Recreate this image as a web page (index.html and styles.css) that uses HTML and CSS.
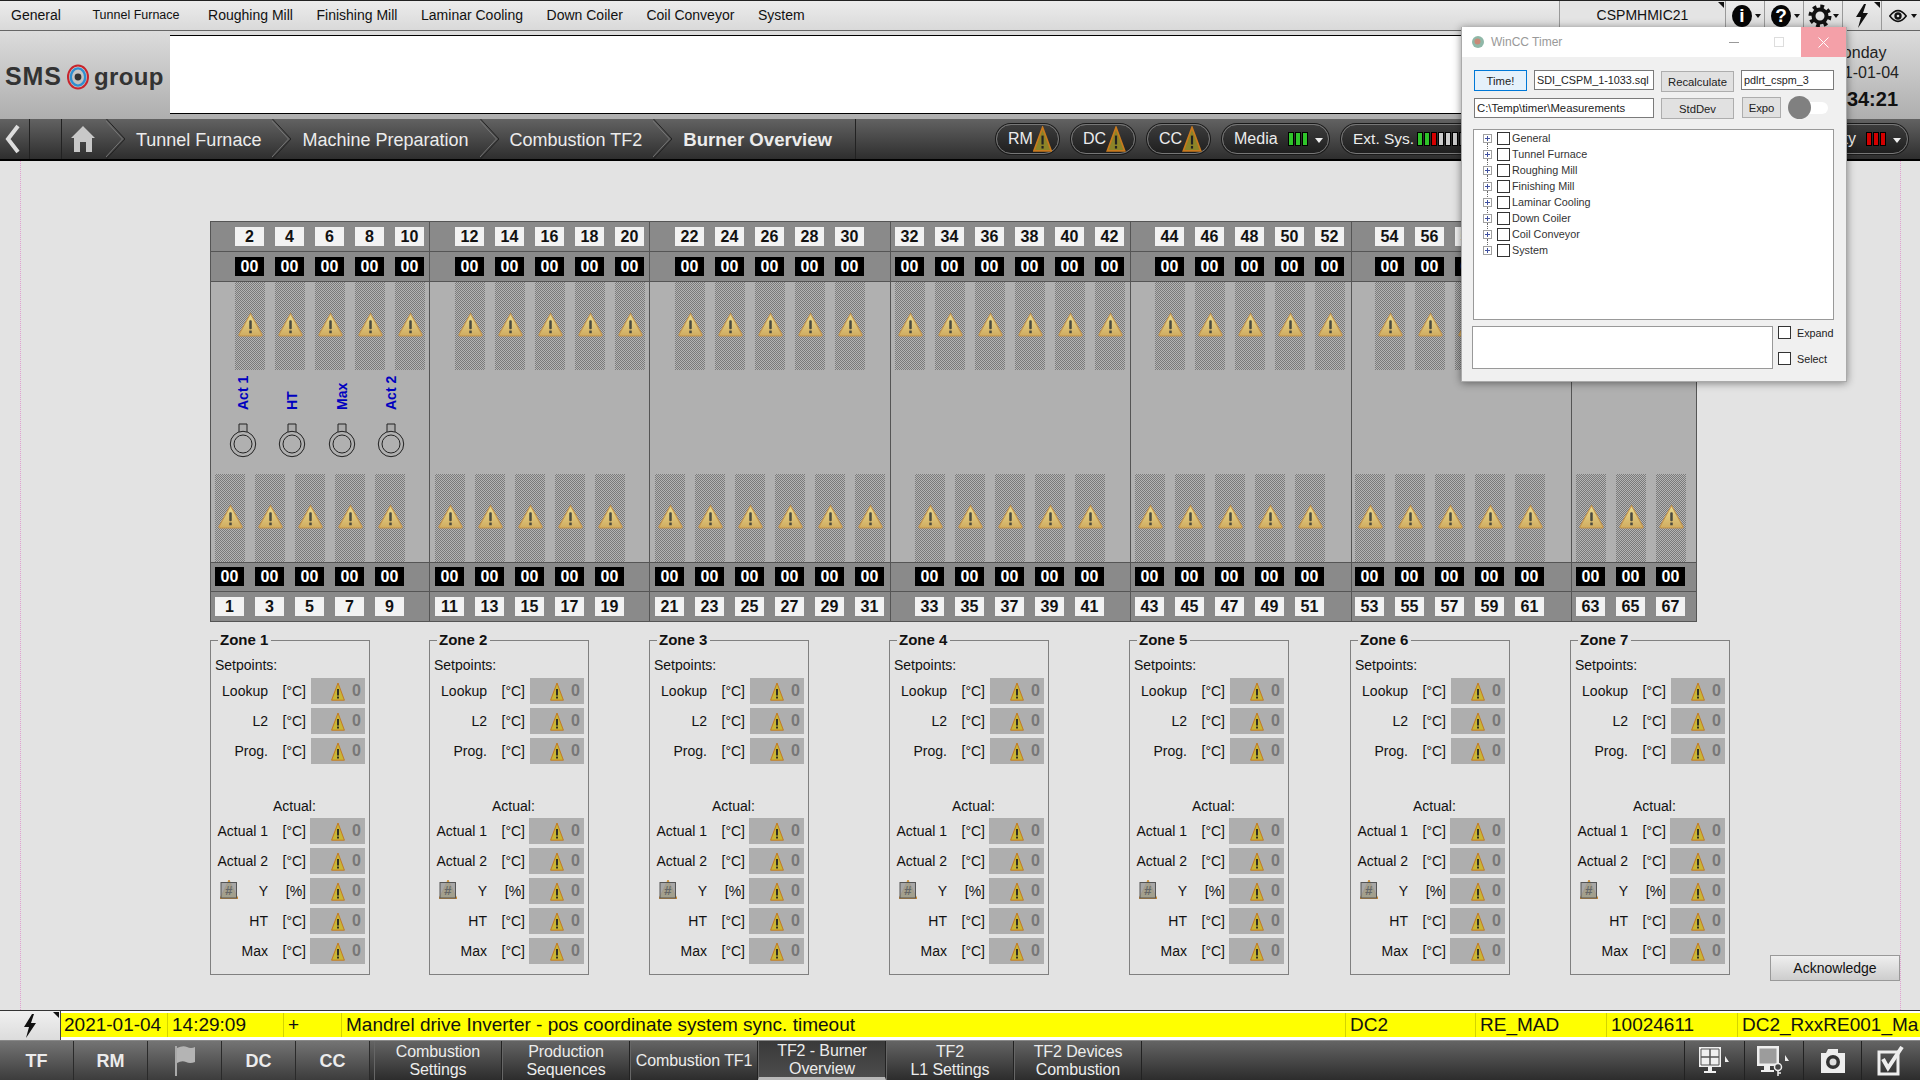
FILE: index.html
```html
<!doctype html>
<html>
<head>
<meta charset="utf-8">
<title>Burner Overview</title>
<link rel="stylesheet" href="styles.css">
</head>
<body>
<svg class="defs" width="0" height="0">
	<defs>
		<linearGradient id="tanktri" x1="0" y1="0" x2="0" y2="1">
			<stop offset="0" stop-color="#ecdc90"/>
			<stop offset="1" stop-color="#d0ac60"/>
		</linearGradient>
	</defs>
	<symbol id="warn" viewBox="0 0 24 24">
		<path d="M12 1.5 L23 21.5 Q23.5 23 22 23 H2 Q.5 23 1 21.5 Z" fill="url(#tanktri)" stroke="#c2924a" stroke-width="1"/>
		<rect x="10.8" y="8" width="2.4" height="8.5" rx="1" fill="#4a4a40"/>
		<rect x="10.8" y="17.8" width="2.4" height="2.6" fill="#4a4a40"/>
	</symbol>
	<symbol id="warnflat" viewBox="0 0 14 19">
		<path d="M7 1 L13.4 18.2 H.6 Z" fill="#c8b636" stroke="#c47a22" stroke-width="1"/>
		<rect x="6.1" y="7" width="1.8" height="6.5" fill="#222"/>
		<rect x="6.1" y="14.6" width="1.8" height="1.9" fill="#222"/>
	</symbol>
	<symbol id="pillwarn" viewBox="0 0 14 19">
		<path d="M7 1 L13.4 18.2 H.6 Z" fill="#8c8428" stroke="#c87a1e" stroke-width="1.2"/>
		<rect x="6.2" y="7" width="1.6" height="6.5" fill="#222"/>
		<rect x="6.2" y="14.6" width="1.6" height="1.9" fill="#222"/>
	</symbol>
	<symbol id="yflag" viewBox="0 0 18 19">
		<path d="M9 0 L18 18.5 H0 Z" fill="#c8b636" stroke="#c47a22" stroke-width=".8"/>
		<rect x="1" y="2.5" width="15.5" height="15.5" fill="#9c9c9c" fill-opacity=".85" stroke="#555"/>
		<text x="8.7" y="15" font-size="13" font-weight="bold" font-style="italic" text-anchor="middle" fill="#666" font-family="Liberation Sans">#</text>
	</symbol>
	<symbol id="chev" viewBox="0 0 19 40">
		<path d="M.5 0 L19 20 L.5 40" fill="none" stroke="#222" stroke-width="1"/>
		<path d="M0 1 L17.5 20 L0 39" fill="none" stroke="#777" stroke-width="1" transform="translate(-1 0)"/>
	</symbol>
</svg>

<header class="menubar">
	<nav class="menu">
		<a class="first">General</a>
		<a class="small">Tunnel Furnace</a>
		<a>Roughing Mill</a>
		<a>Finishing Mill</a>
		<a>Laminar Cooling</a>
		<a>Down Coiler</a>
		<a>Coil Conveyor</a>
		<a>System</a>
	</nav>
	<div class="tools">
		<div class="station">CSPMHMIC21<i class="corner"></i></div>
		<div class="tool"><b class="round">i</b><i class="caret"></i></div>
		<div class="tool"><b class="round">?</b><i class="caret"></i></div>
		<div class="tool">
			<svg width="24" height="24" viewBox="0 0 24 24"><circle cx="12" cy="12" r="9.5" fill="none" stroke="#111" stroke-width="4" stroke-dasharray="3.7 3.76"/><circle cx="12" cy="12" r="6.5" fill="none" stroke="#111" stroke-width="4"/></svg>
			<i class="caret"></i>
		</div>
		<div class="tool bolt">
			<svg width="16" height="26" viewBox="0 0 16 26"><path d="M10 1 L2 14 H7 L4 25 L14 10 H9 L12 1 Z" fill="#111"/></svg>
			<i class="corner"></i>
		</div>
		<div class="tool">
			<svg width="18" height="14" viewBox="0 0 22 16"><path d="M1 8 Q11 -5 21 8 Q11 21 1 8 Z" fill="none" stroke="#111" stroke-width="2"/><circle cx="11" cy="8" r="4.5" fill="#111"/><circle cx="11" cy="8" r="1.6" fill="#ddd"/></svg>
			<i class="caret"></i>
		</div>
	</div>
</header>

<section class="brandbar">
	<div class="logo">
		<span class="sms">SMS</span>
		<svg width="24" height="26" viewBox="0 0 24 26"><ellipse cx="12" cy="13" rx="10" ry="11.5" fill="none" stroke="#c8242c" stroke-width="2"/><ellipse cx="12" cy="13" rx="7.2" ry="8.6" fill="none" stroke="#2f8fd0" stroke-width="2.4"/><circle cx="12" cy="13" r="3.4" fill="#333"/></svg>
		<span>group</span>
	</div>
	<div class="whitebox"></div>
	<div class="clock">
		<span>Monday</span>
		<span>2021-01-04</span>
		<strong>14:34:21</strong>
	</div>
</section>

<section class="navbar">
	<div class="back">
		<svg width="16" height="30" viewBox="0 0 16 30"><path d="M13 2 L3 15 L13 28" fill="none" stroke="#ddd" stroke-width="4"/></svg>
	</div>
	<div class="home">
		<svg width="26" height="28" viewBox="0 0 26 28"><path d="M13 1 L25 13 H22 V27 H16 V17 H10 V27 H4 V13 H1 Z" fill="#c8c8c8"/></svg>
	</div>
	<div class="crumb"><svg class="chev"><use href="#chev"/></svg><span>Tunnel Furnace</span></div>
	<div class="crumb"><svg class="chev"><use href="#chev"/></svg><span>Machine Preparation</span></div>
	<div class="crumb"><svg class="chev"><use href="#chev"/></svg><span>Combustion TF2</span></div>
	<div class="crumb last"><svg class="chev"><use href="#chev"/></svg><span>Burner Overview</span></div>
	<div class="pills">
		<div class="pill p63">RM<svg class="pwarn"><use href="#pillwarn"/></svg></div>
		<div class="pill p64">DC<svg class="pwarn"><use href="#pillwarn"/></svg></div>
		<div class="pill p63">CC<svg class="pwarn"><use href="#pillwarn"/></svg></div>
		<div class="pill p107">Media<span class="bars"><i class="g"></i><i class="g"></i><i class="g"></i></span><i class="down"></i></div>
		<div class="pill p140">Ext. Sys.<span class="bars"><i class="g"></i><i class="g"></i><i class="r"></i><i class="l"></i><i class="l"></i><i class="l"></i><i class="d"></i></span></div>
		<div class="pill p128">Safety<span class="bars"><i class="r"></i><i class="r"></i><i class="r"></i></span><i class="down"></i></div>
	</div>
</section>

<main class="content">
	<div class="burners" id="burners"></div>
	<div class="zones" id="zones">
		<button class="ack">Acknowledge</button>
	</div>
</main>

<section class="alarm">
	<div class="alarmbtn">
		<svg width="16" height="26" viewBox="0 0 16 26"><path d="M10 1 L2 14 H7 L4 25 L14 10 H9 L12 1 Z" fill="#111"/></svg>
		<i class="corner"></i>
	</div>
	<div class="alarmrow">
		<span class="c1">2021-01-04</span>
		<span class="c2">14:29:09</span>
		<span class="c3">+</span>
		<span class="c4">Mandrel drive Inverter - pos coordinate system sync. timeout</span>
		<span class="c5">DC2</span>
		<span class="c6">RE_MAD</span>
		<span class="c7">10024611</span>
		<span class="c8">DC2_RxxRE001_MandrelDrive</span>
	</div>
</section>

<footer class="bottombar">
	<a class="area">TF</a>
	<a class="area">RM</a>
	<a class="area">
		<svg width="22" height="32" viewBox="0 0 22 32"><path d="M2 1 V31" stroke="#aaa" stroke-width="2"/><path d="M3 3 Q9 0 13 2 T21 2 V17 Q16 19 12 17 T3 18 Z" fill="#b4b4b4"/></svg>
	</a>
	<a class="area">DC</a>
	<a class="area spaced">CC</a>
	<a class="page">Combustion<br>Settings</a>
	<a class="page">Production<br>Sequences</a>
	<a class="page">Combustion TF1</a>
	<a class="page active">TF2 - Burner<br>Overview</a>
	<a class="page">TF2<br>L1 Settings</a>
	<a class="page">TF2 Devices<br>Combustion</a>
	<div class="actions">
		<a class="action w60">
			<svg width="34" height="30" viewBox="0 0 34 30"><path d="M1 1 H23 V21 H1 Z M10 21 H14 V25 H18 V27 H6 V25 H10 Z" fill="#f0f0f0"/><path d="M3 3 H21 V19 H3 Z" fill="none" stroke="#555"/><path d="M12 3 V19 M3 11 H21" stroke="#555" stroke-width="1.5"/><path d="M27 10 L31 16 H27 Z" fill="#eee"/></svg>
		</a>
		<a class="action w59">
			<svg width="36" height="32" viewBox="0 0 36 32"><path d="M1 1 H23 V21 H1 Z M8 21 H14 V25 H18 V27 H5 V25 H8 Z" fill="#eee"/><path d="M3.5 3.5 H20.5 V18.5 H3.5 Z" fill="#9c9c9c"/><circle cx="22" cy="22" r="3.5" fill="#444" stroke="#eee" stroke-width="1.5"/><path d="M22 25 V31 M22 28 H25" stroke="#eee" stroke-width="1.5"/><path d="M29 10 L33 16 H29 Z" fill="#eee"/></svg>
		</a>
		<a class="action w58">
			<svg width="26" height="26" viewBox="0 0 26 26"><path d="M1 5 H6 L8 1 H18 V5 H25 V25 H1 Z" fill="#eee"/><circle cx="13" cy="14" r="7" fill="#333"/><circle cx="13" cy="14" r="3.5" fill="#ddd"/></svg>
		</a>
		<a class="action w59">
			<svg width="28" height="30" viewBox="0 0 28 30"><path d="M2 6 H21 V28 H2 Z" fill="none" stroke="#eee" stroke-width="3"/><path d="M6 13 L11 22 L25 1" fill="none" stroke="#eee" stroke-width="4"/></svg>
		</a>
	</div>
</footer>

<aside class="timer">
	<div class="timertitle">
		<svg width="14" height="14" viewBox="0 0 14 14"><circle cx="7" cy="7" r="6" fill="#8fb8a8"/><circle cx="6.5" cy="6.5" r="3" fill="#c98a78"/></svg>
		<span class="wintitle">WinCC Timer</span>
		<i class="winmin"></i>
		<i class="winmax"></i>
		<span class="winclose">
			<svg width="11" height="11" viewBox="0 0 11 11"><path d="M.5 .5 L10.5 10.5 M10.5 .5 L.5 10.5" stroke="#fff" stroke-width="1"/></svg>
		</span>
	</div>
	<div class="timerbody">
		<div class="timerline">
			<button class="winbtn focus w53">Time!</button>
			<div class="wininput w120">SDI_CSPM_1-1033.sql</div>
			<button class="winbtn w73 down1">Recalculate</button>
			<div class="wininput w93">pdlrt_cspm_3</div>
		</div>
		<div class="timerline second">
			<div class="wininput w180">C:\Temp\timer\Measurements</div>
			<button class="winbtn w73">StdDev</button>
			<button class="winbtn w39 up1">Expo</button>
			<div class="toggle"><i></i></div>
		</div>
		<div class="tree">
			<div class="node"><i class="plus"></i><i class="box"></i>General</div>
			<div class="node"><i class="plus"></i><i class="box"></i>Tunnel Furnace</div>
			<div class="node"><i class="plus"></i><i class="box"></i>Roughing Mill</div>
			<div class="node"><i class="plus"></i><i class="box"></i>Finishing Mill</div>
			<div class="node"><i class="plus"></i><i class="box"></i>Laminar Cooling</div>
			<div class="node"><i class="plus"></i><i class="box"></i>Down Coiler</div>
			<div class="node"><i class="plus"></i><i class="box"></i>Coil Conveyor</div>
			<div class="node"><i class="plus"></i><i class="box"></i>System</div>
		</div>
		<div class="timerfoot">
			<div class="notes"></div>
			<div class="checks">
				<label><i class="box"></i>Expand</label>
				<label><i class="box"></i>Select</label>
			</div>
		</div>
	</div>
</aside>

<script src="script.js"></script>
</body>
</html>
```

FILE: styles.css
```css
*{
	box-sizing:border-box;
	margin:0;
	padding:0;
}

body{
	width:1920px;
	height:1080px;
	overflow:hidden;
	position:relative;
	display:flex;
	flex-direction:column;
	background:#e3e3e3;
	font-family:"Liberation Sans",Arial,sans-serif;
	color:#111;
}

.defs{
	position:absolute;
}

i{
	font-style:normal;
}

/* top menu */
.menubar{
	height:31px;
	flex:none;
	display:flex;
	justify-content:space-between;
	background:linear-gradient(#ececec,#d9d9d9);
	border-top:1px solid #222;
	border-bottom:1px solid #666;
}

.menu{
	display:flex;
	align-items:center;
	gap:23.6px;
	padding:0 0 2px 11px;
	font-size:14px;
}

.menu .first{
	margin-right:8px;
}

.menu .small{
	font-size:12.5px;
	margin-right:5px;
}

.tools{
	display:flex;
}

.station{
	width:166px;
	position:relative;
	display:flex;
	align-items:center;
	justify-content:center;
	padding-bottom:2px;
	font-size:14px;
	background:#e4e4e4;
	border-left:1px solid #999;
}

.tool{
	width:39px;
	position:relative;
	display:flex;
	align-items:center;
	justify-content:center;
	border-left:1px solid #999;
	padding-right:6px;
}

.tool.bolt{
	padding-right:0;
}

.round{
	width:20px;
	height:22px;
	border-radius:50%;
	background:#050505;
	color:#fff;
	font-size:19px;
	line-height:22px;
	text-align:center;
}

.caret{
	position:absolute;
	right:3px;
	top:13px;
	border:3px solid transparent;
	border-top:4px solid #111;
}

.corner{
	position:absolute;
	right:1px;
	top:1px;
	border:3px solid transparent;
	border-top-color:#111;
	border-right-color:#111;
}

/* logo band */
.brandbar{
	height:88px;
	flex:none;
	display:flex;
	padding:4px 0 5px;
	background:linear-gradient(#dcdcdc,#aeaeae);
}

.logo{
	width:170px;
	flex:none;
	display:flex;
	align-items:center;
	gap:4px;
	padding:4px 0 0 5px;
	font-size:24px;
	font-weight:bold;
	letter-spacing:.4px;
	color:#333;
}

.logo .sms{
	font-size:25px;
	letter-spacing:.9px;
}

.whitebox{
	flex:1;
	background:#fff;
	border-top:1px solid #000;
	border-bottom:1px solid #000;
}

.clock{
	width:140px;
	flex:none;
	display:flex;
	flex-direction:column;
	align-items:center;
	justify-content:center;
	padding:3px 0 0 16px;
	font-size:16px;
	line-height:20px;
	color:#222;
}

.clock strong{
	margin-top:6px;
	font-size:20px;
	color:#111;
}

/* breadcrumb bar */
.navbar{
	height:42px;
	flex:none;
	display:flex;
	background:linear-gradient(#626262,#2e2e2e);
	border-bottom:2px solid #000;
	color:#ececec;
}

.back{
	width:62px;
	flex:none;
	display:flex;
	align-items:center;
	padding-left:5px;
	background:linear-gradient(90deg,transparent 29px,#222 29px,#222 30px,transparent 30px);
	border-right:1px solid #222;
}

.home{
	width:44px;
	flex:none;
	display:flex;
	align-items:center;
	padding-left:8px;
}

.crumb{
	display:flex;
	align-items:center;
	font-size:18px;
}

.crumb span{
	padding:2px 11px 0 11px;
}

.crumb.last{
	font-weight:bold;
	font-size:18.6px;
	padding-right:12px;
	border-right:1px solid #222;
}

.chev{
	width:19px;
	height:40px;
	flex:none;
}

.pills{
	margin-left:auto;
	display:flex;
	align-items:center;
	gap:12px;
	padding-right:12px;
}

.pill{
	height:30px;
	flex:none;
	display:flex;
	align-items:center;
	padding:0 6px 0 11px;
	border-radius:15px;
	background:linear-gradient(#3c3c3c,#1f1f1f);
	border:1px solid #777;
	box-shadow:0 0 0 1px #1a1a1a;
	font-size:16px;
	white-space:nowrap;
}

.p63{ width:63px; }
.p64{ width:64px; }
.p107{ width:107px; }
.p140{ width:140px; font-size:15.5px; }
.p128{ width:128px; margin-left:287px; justify-content:flex-end; }

.pwarn{
	width:20px;
	height:26px;
}

.bars{
	display:flex;
	margin-left:10px;
	gap:1px;
}

.p140 .bars{
	margin-left:3px;
}

.bars i{
	width:6px;
	height:14px;
	border:1px solid #000;
}

.bars .g{ background:#2fc42a; }
.bars .r{ background:#d40000; }
.bars .l{ background:#ccc; }
.bars .d{ background:#666; }

.down{
	margin:3px 0 0 7px;
	border:4px solid transparent;
	border-top:5px solid #eee;
	border-bottom:0;
}

/* main area */
.content{
	flex:1;
	margin:0 19px 0 20px;
	padding:60px 0 0 189px;
	border-left:1px dotted #e0a0d0;
	border-right:1px dotted #e0a0d0;
}

.burners{
	display:grid;
	grid-template-columns:219px 220px 241px 240px 221px 220px 124px;
	width:1487px;
	height:401px;
	border:1px solid #555;
	background:#b0b0b0;
}

.section{
	display:flex;
	flex-direction:column;
	border-right:1px solid #555;
}

.section:last-child{
	border-right:0;
}

.tiles{
	height:30px;
	flex:none;
	display:flex;
	align-items:center;
	gap:11px;
	background:#8a8a8a;
	border-bottom:1px solid #555;
}

.tiles.low{
	padding-bottom:2px;
	border-top:1px solid #555;
}

.tiles.end{
	height:29px;
	border-bottom:0;
	padding-bottom:1px;
}

.tile{
	width:29px;
	height:19px;
	flex:none;
	font-size:16px;
	font-weight:bold;
	line-height:19px;
	text-align:center;
	background:#f2f2f2;
}

.tile.zero{
	background:#000;
	color:#fff;
}

.middle{
	flex:1;
	display:flex;
	flex-direction:column;
	justify-content:space-between;
	min-height:0;
}

.tanks{
	display:flex;
	gap:10px;
}

.tank{
	width:30px;
	height:88px;
	flex:none;
	display:flex;
	align-items:center;
	justify-content:center;
	padding-bottom:3px;
	background:repeating-conic-gradient(#7a7a7a 0 25%,#b4b4b4 0 50%) 0 0/2px 2px;
}

.tank svg{
	width:25px;
	height:25px;
}

.probes{
	display:flex;
	padding:6px 0 0 7px;
	flex:1;
}

.probe{
	width:49.5px;
	display:flex;
	flex-direction:column;
	align-items:center;
}

.probe span{
	height:34px;
	margin-bottom:12px;
	writing-mode:vertical-rl;
	transform:rotate(180deg);
	font-size:14px;
	font-weight:bold;
	color:#0000c0;
	white-space:nowrap;
	line-height:16px;
}

/* zone boxes */
.zones{
	display:grid;
	grid-template-columns:219px 220px 240px 240px 221px 220px 160px 1fr;
	margin-top:10px;
	height:349px;
}

.zone{
	width:160px;
	height:343px;
	border:1px solid #808080;
	padding:0 4px;
	font-size:14px;
}

.zone legend{
	margin-left:3px;
	padding:0 3px 0 2px;
	font-size:15px;
	font-weight:bold;
	line-height:16px;
}

.zonehead{
	height:18px;
	line-height:18px;
	margin:8px 0 4px;
}

.zonehead.actual{
	margin:33px 0 3px;
	padding-left:58px;
}

.zrow{
	height:26px;
	margin-bottom:4px;
	display:flex;
	align-items:center;
}

.zlabel{
	width:53px;
	flex:none;
	position:relative;
	text-align:right;
	white-space:nowrap;
}

.zlabel svg{
	position:absolute;
	left:5px;
	top:-3px;
	width:18px;
	height:19px;
}

.zunit{
	width:38px;
	flex:none;
	text-align:right;
}

.zvalue{
	width:54px;
	height:26px;
	margin-left:auto;
	display:flex;
	align-items:center;
	justify-content:flex-end;
	gap:7px;
	padding-right:4px;
	background:#aeaeae;
	color:#777;
	font-size:16px;
	font-weight:bold;
}

.zvalue svg{
	width:14px;
	height:19px;
}

.zvalue.wide{
	width:55px;
}

.ack{
	grid-column:8;
	justify-self:end;
	align-self:end;
	width:130px;
	height:26px;
	border:1px solid #999;
	background:linear-gradient(#efefef,#cdcdcd);
	font-family:inherit;
	font-size:14px;
	color:#111;
}

/* alarm line */
.alarm{
	height:31px;
	flex:none;
	display:flex;
	background:#fff;
	border-top:1px solid #333;
	border-bottom:1px solid #888;
}

.alarmbtn{
	width:61px;
	flex:none;
	position:relative;
	display:flex;
	align-items:center;
	justify-content:center;
	background:linear-gradient(#f0f0f0,#dcdcdc);
	border-right:1px solid #444;
}

.alarmrow{
	flex:1;
	min-width:0;
	display:flex;
	margin:2px 0 3px;
	background:#ff0;
	font-size:19px;
	line-height:23px;
	overflow:hidden;
	white-space:nowrap;
}

.alarmrow span{
	flex:none;
	padding-left:4px;
	border-left:1px solid #d4d400;
	overflow:hidden;
}

.alarmrow .c1{ width:106px; border-left:0; padding-left:3px; }
.alarmrow .c2{ width:116px; }
.alarmrow .c3{ width:58px; }
.alarmrow .c4{ width:1004px; }
.alarmrow .c5{ width:130px; }
.alarmrow .c6{ width:131px; }
.alarmrow .c7{ width:131px; }
.alarmrow .c8{ width:182px; }

/* bottom bar */
.bottombar{
	height:39px;
	flex:none;
	display:flex;
	background:linear-gradient(#646464,#2c2c2c);
	color:#ececec;
	font-size:16px;
	line-height:18px;
	text-align:center;
}

.bottombar a{
	display:flex;
	align-items:center;
	justify-content:center;
}

.area{
	width:74px;
	flex:none;
	font-size:18px;
	font-weight:bold;
	background:linear-gradient(#747474,#3c3c3c);
	border-right:1px solid #2a2a2a;
}

.area.spaced{
	margin-right:4px;
}

.page{
	width:128px;
	flex:none;
	border-right:1px solid #222;
	border-left:1px solid #666;
	padding-top:1px;
	letter-spacing:-.1px;
}

.page.active{
	background:linear-gradient(#3a3a3a,#4c4c4c);
	border-bottom:3px solid #b8b8b8;
}

.actions{
	margin-left:auto;
	display:flex;
}

.action{
	border-left:1px solid #222;
}

.action.w60{ width:60px; }
.action.w59{ width:59px; }
.action.w58{ width:58px; }

/* floating window */
.timer{
	position:absolute;
	left:1461px;
	top:27px;
	width:386px;
	height:355px;
	background:#f0f0f0;
	box-shadow:0 1px 8px rgba(0,0,0,.45);
	border:1px solid #aaa;
	border-top:0;
	font-size:10.8px;
	color:#222;
}

.timertitle{
	height:30px;
	display:flex;
	align-items:center;
	background:#fff;
	padding-left:9px;
}

.wintitle{
	margin-left:6px;
	font-size:12px;
	color:#999;
}

.winmin{
	width:10px;
	height:1px;
	margin-left:167px;
	background:#999;
}

.winmax{
	width:10px;
	height:10px;
	margin-left:35px;
	border:1px solid #ddd;
}

.winclose{
	width:45px;
	height:30px;
	margin-left:auto;
	display:flex;
	align-items:center;
	justify-content:center;
	background:#f4a0a8;
}

.timerbody{
	padding:13px 0 0 12px;
}

.timerline{
	display:flex;
	gap:7px;
	align-items:flex-start;
}

.timerline.second{
	margin-top:6px;
}

.winbtn{
	height:21px;
	border:1px solid #adadad;
	background:#e1e1e1;
	font-family:inherit;
	font-size:11.3px;
	color:#222;
}

.winbtn.focus{
	background:#e5f1fb;
	border-color:#0078d7;
}

.winbtn.down1{ margin-top:1px; }
.winbtn.up1{ margin:-1px 0 0 1px; }

.wininput{
	height:20px;
	padding-left:2px;
	line-height:18px;
	background:#fff;
	border:1px solid #7a7a7a;
	white-space:nowrap;
}

.w53{ width:53px; }
.w120{ width:120px; }
.w73{ width:73px; }
.w93{ width:93px; }
.w39{ width:39px; }

.w180{
	width:180px;
	font-size:11.3px;
}

.toggle{
	position:relative;
	width:40px;
	height:23px;
	margin-top:-2px;
}

.toggle:before{
	content:"";
	position:absolute;
	left:8px;
	top:6px;
	width:32px;
	height:12px;
	border-radius:6px;
	background:#fff;
}

.toggle i{
	position:absolute;
	left:0;
	top:0;
	width:23px;
	height:23px;
	border-radius:50%;
	background:#808080;
}

.tree{
	width:361px;
	height:191px;
	margin:10px 0 0 -1px;
	padding:0 0 0 9px;
	background:#fff;
	border:1px solid #999;
}

.node{
	height:16px;
	display:flex;
	align-items:center;
	color:#333;
}

.plus{
	position:relative;
	width:9px;
	height:9px;
	margin-right:5px;
	border:1px solid #a0a0a0;
	background:linear-gradient(#4050a0,#4050a0) center/5px 1px no-repeat,linear-gradient(#4050a0,#4050a0) center/1px 5px no-repeat;
}

.plus:after{
	content:"";
	position:absolute;
	left:3px;
	top:8px;
	height:8px;
	border-left:1px dotted #666;
}

.node:last-child .plus:after{
	display:none;
}

.box{
	width:13px;
	height:13px;
	flex:none;
	margin-right:2px;
	background:#fff;
	border:1px solid #333;
}

.timerfoot{
	display:flex;
	margin:6px 0 0 -2px;
}

.notes{
	width:301px;
	height:43px;
	background:#fff;
	border:1px solid #999;
}

.checks{
	margin-left:5px;
	display:flex;
	flex-direction:column;
	gap:13px;
}

.checks label{
	height:13px;
	display:flex;
	align-items:center;
}

.checks .box{
	margin-right:6px;
}
```

FILE: script.js
```js
// burner layout: first number, count and left padding of the upper and lower rows
var sections=[
	{top:[2,5,24],low:[1,5,4]},
	{top:[12,5,25],low:[11,5,5]},
	{top:[22,5,25],low:[21,6,5]},
	{top:[32,6,4],low:[33,5,24]},
	{top:[44,5,24],low:[43,5,4]},
	{top:[54,5,23],low:[53,5,3]},
	{top:[64,2,23],low:[63,3,4]}
];

var warn='<svg><use href="#warn"/></svg>';
var warnflat='<svg><use href="#warnflat"/></svg>';

function tilesRow(spec,zero,cls){
	var html='<div class="tiles '+cls+'" style="padding-left:'+spec[2]+'px">';
	for(var i=0;i<spec[1];i++){
		html+=zero?'<div class="tile zero">00</div>':'<div class="tile">'+(spec[0]+i*2)+'</div>';
	}
	return html+'</div>';
}

function tanksRow(spec){
	var html='<div class="tanks" style="padding-left:'+spec[2]+'px">';
	for(var i=0;i<spec[1];i++){
		html+='<div class="tank">'+warn+'</div>';
	}
	return html+'</div>';
}

function probes(){
	var names=["Act 1","HT","Max","Act 2"];
	var html='<div class="probes">';
	for(var i=0;i<names.length;i++){
		html+='<div class="probe"><span>'+names[i]+'</span>'+
			'<svg width="28" height="36" viewBox="0 0 28 36"><path d="M10 10 V2 H18 V10" fill="#aaa" stroke="#222"/>'+
			'<circle cx="14" cy="22" r="12.7" fill="#b0b0b0" stroke="#222"/><circle cx="14" cy="22" r="9" fill="#b0b0b0" stroke="#222"/></svg></div>';
	}
	return html+'</div>';
}

function zrow(label,unit,wide,flag){
	return '<div class="zrow"><div class="zlabel">'+(flag?'<svg><use href="#yflag"/></svg>':'')+label+'</div>'+
		'<div class="zunit">'+unit+'</div>'+
		'<div class="zvalue'+(wide?' wide':'')+'">'+warnflat+'0</div></div>';
}

window.onload=function(){
	var objburn=document.getElementById("burners");
	var objzones=document.getElementById("zones");
	var ack=objzones.querySelector(".ack");
	var html="";

	for(var s=0;s<sections.length;s++){
		var sec=sections[s];
		html+='<div class="section">'+
			tilesRow(sec.top,false,"")+
			tilesRow(sec.top,true,"")+
			'<div class="middle">'+tanksRow(sec.top)+(s==0?probes():"")+tanksRow(sec.low)+'</div>'+
			tilesRow(sec.low,true,"low")+
			tilesRow(sec.low,false,"end")+
			'</div>';

		var zone=document.createElement("fieldset");
		zone.className="zone";
		zone.innerHTML='<legend>Zone '+(s+1)+'</legend>'+
			'<div class="zonehead">Setpoints:</div>'+
			zrow("Lookup","[°C]")+zrow("L2","[°C]")+zrow("Prog.","[°C]")+
			'<div class="zonehead actual">Actual:</div>'+
			zrow("Actual 1","[°C]",true)+zrow("Actual 2","[°C]",true)+zrow("Y","[%]",true,true)+
			zrow("HT","[°C]",true)+zrow("Max","[°C]",true);
		objzones.insertBefore(zone,ack);
	}
	objburn.innerHTML=html;
};
```
